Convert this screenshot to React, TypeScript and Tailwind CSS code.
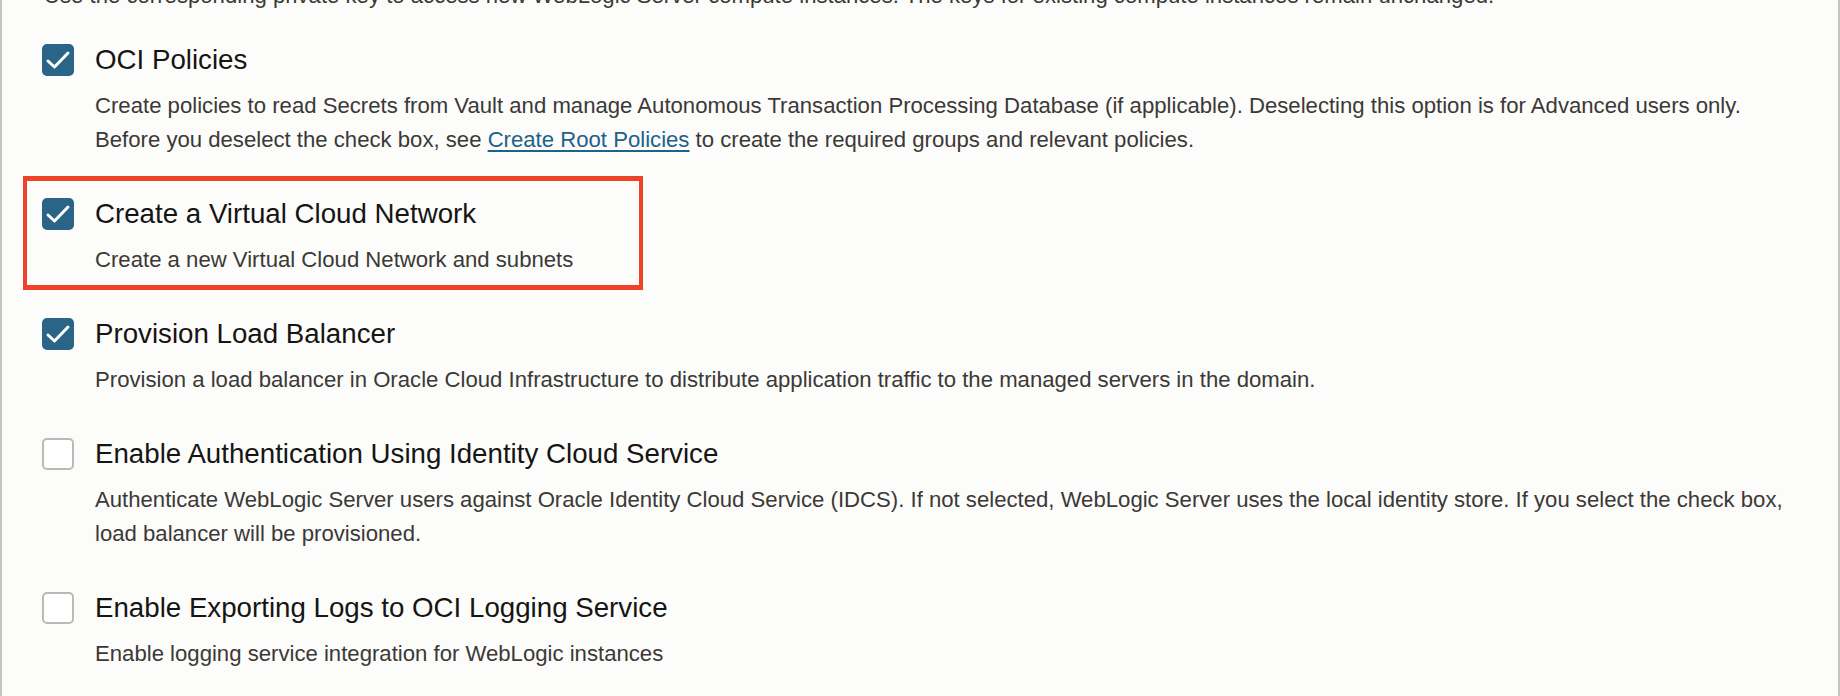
import React from "react";

function Check({ checked }: { checked: boolean }) {
  if (checked) {
    return (
      <div className="w-[32px] h-[32px] shrink-0 rounded-[5px] bg-[#2a6486] flex items-center justify-center">
        <svg width="32" height="32" viewBox="0 0 32 32" fill="none">
          <polyline points="6,17 12.5,23 26,9" stroke="#ffffff" strokeWidth="3" strokeLinecap="round" strokeLinejoin="round" />
        </svg>
      </div>
    );
  }
  return <div className="w-[32px] h-[32px] shrink-0 rounded-[5px] border-2 border-[#bdb8b3] bg-white" />;
}

function Item({ checked, title, children }: { checked: boolean; title: string; children: React.ReactNode }) {
  return (
    <div className="flex flex-col">
      <div className="flex items-center gap-[21px]">
        <Check checked={checked} />
        <div className="text-[27.7px] leading-[32px] text-[#161513] whitespace-nowrap">{title}</div>
      </div>
      <div className="ml-[53px] mt-[13px] text-[22.15px] leading-[34px] text-[#3b3936] whitespace-nowrap">{children}</div>
    </div>
  );
}

export default function App() {
  return (
    <div className="w-[1840px] h-[696px] overflow-hidden bg-[#fcfcfb] border-x-2 border-[#c6c2be] font-['Liberation_Sans',Arial,sans-serif]">
      <div className="pl-[40px]">
        <div className="mt-[-21px] ml-[2px] text-[22.15px] leading-[34px] text-[#3b3936] whitespace-nowrap">
          Use the corresponding private key to access new WebLogic Server compute instances. The keys for existing compute instances remain unchanged.
        </div>
        <div className="mt-[31px] flex flex-col gap-[41px]">
          <Item checked title="OCI Policies">
            Create policies to read Secrets from Vault and manage Autonomous Transaction Processing Database (if applicable). Deselecting this option is for Advanced users only.
            <br />
            Before you deselect the check box, see{" "}
            <a href="#" className="text-[#1f6288] underline underline-offset-[3px]">Create Root Policies</a> to create the required groups and relevant policies.
          </Item>
          <div className="relative">
            <Item checked title="Create a Virtual Cloud Network">
              Create a new Virtual Cloud Network and subnets
            </Item>
            <div className="absolute left-[-19px] top-[-22px] w-[620px] h-[114px] border-x-4 border-y-[5px] border-[#ec4329] pointer-events-none" />
          </div>
          <Item checked title="Provision Load Balancer">
            Provision a load balancer in Oracle Cloud Infrastructure to distribute application traffic to the managed servers in the domain.
          </Item>
          <Item checked={false} title="Enable Authentication Using Identity Cloud Service">
            Authenticate WebLogic Server users against Oracle Identity Cloud Service (IDCS). If not selected, WebLogic Server uses the local identity store. If you select the check box,
            <br />
            load balancer will be provisioned.
          </Item>
          <Item checked={false} title="Enable Exporting Logs to OCI Logging Service">
            Enable logging service integration for WebLogic instances
          </Item>
        </div>
      </div>
    </div>
  );
}
